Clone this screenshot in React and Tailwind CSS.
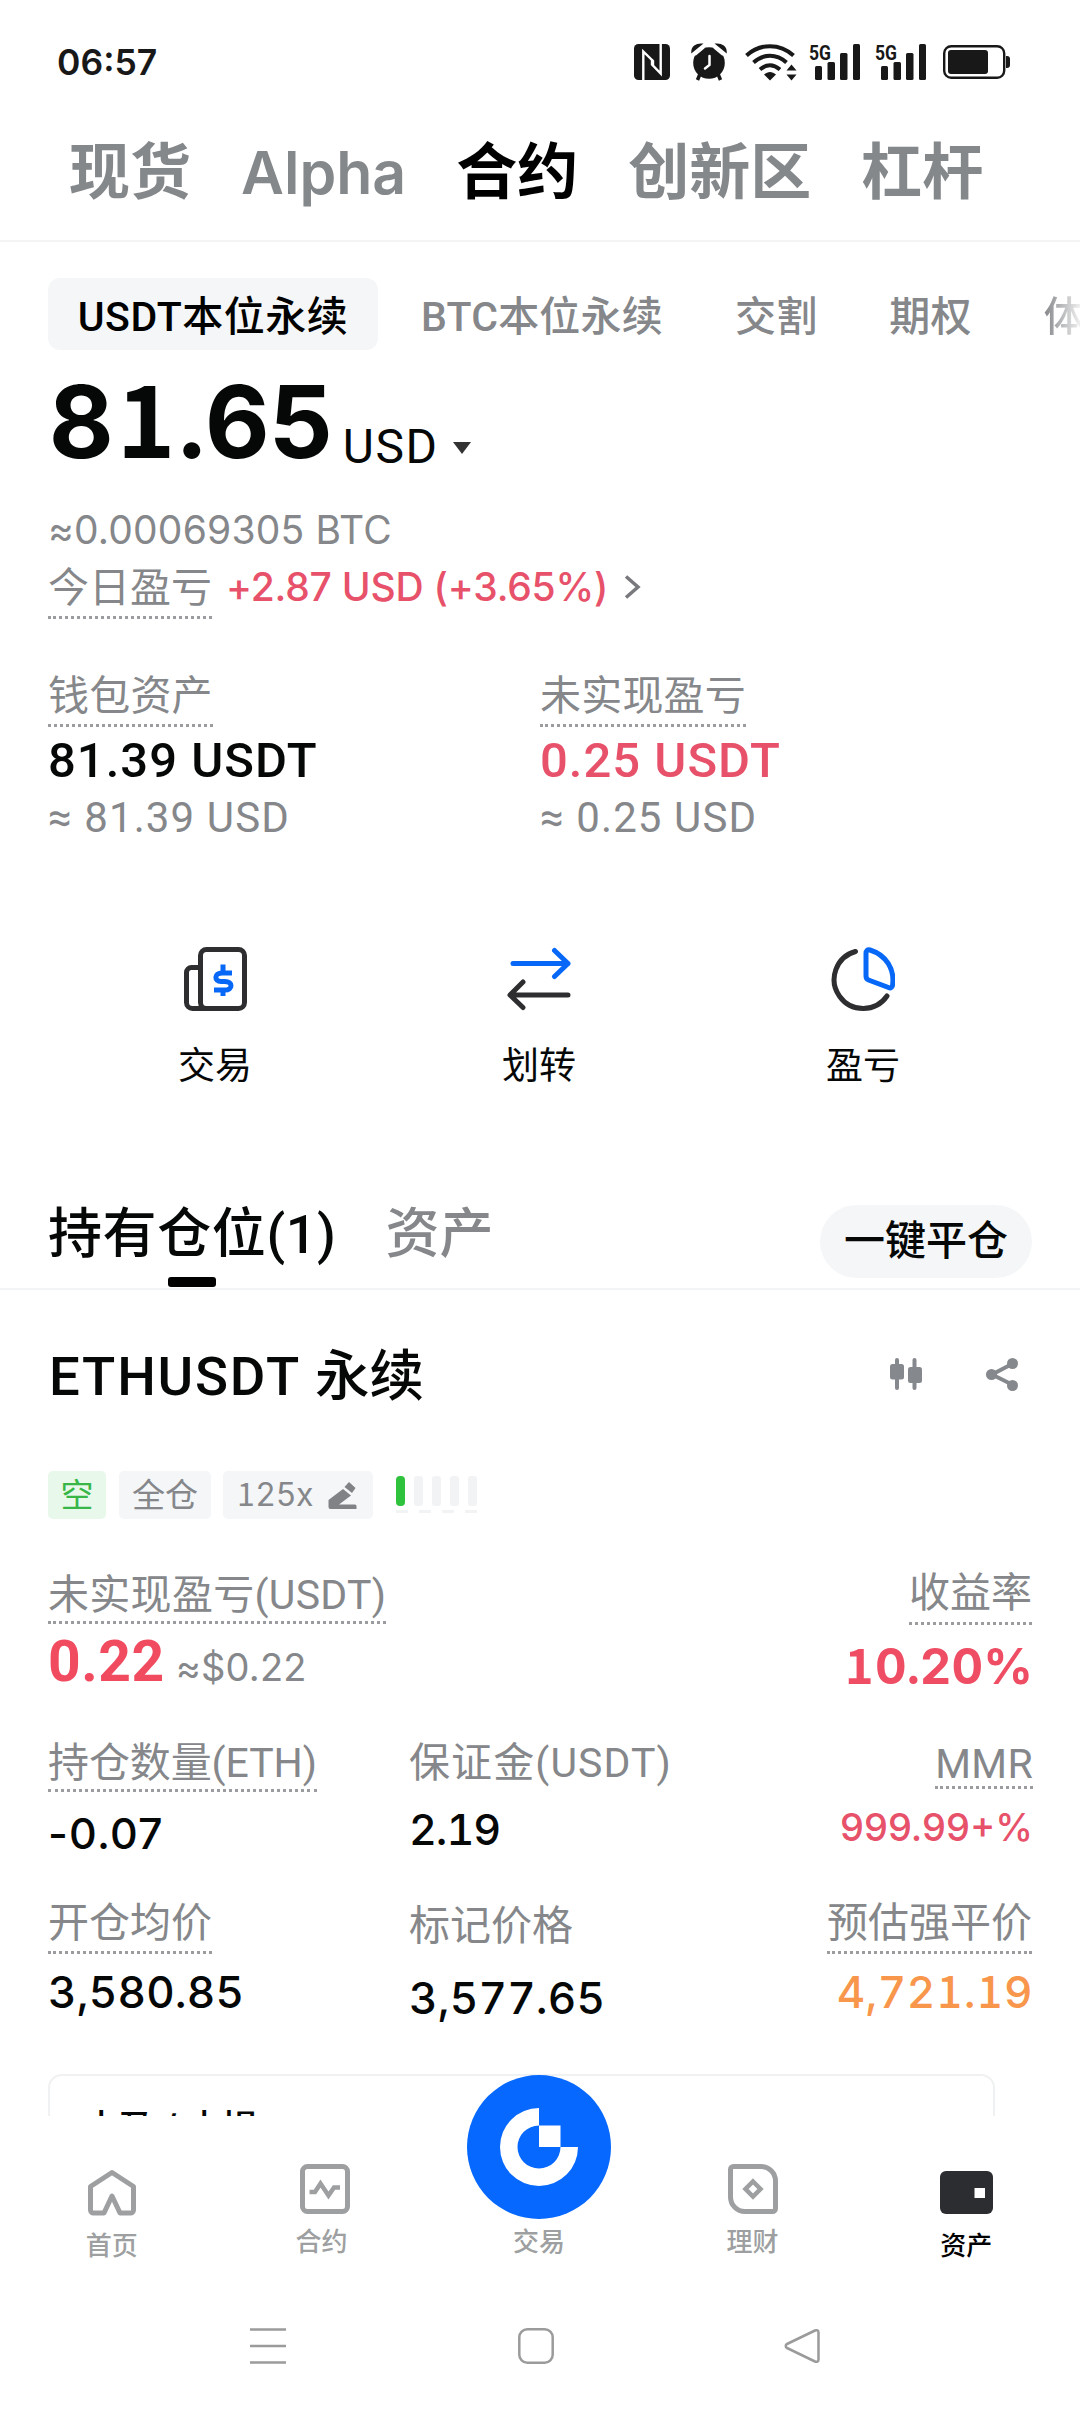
import React from "react";
import clsx from "clsx";

const marketTabs = ["现货", "Alpha", "合约", "创新区", "杠杆"];
const contractTypes = ["BTC本位永续", "交割", "期权"];

const roboto = "font-[Roboto,'Noto_Sans_CJK_SC',sans-serif]";

// Digits with a slab "1"
function SlabNumber({ value, className }) {
    return (
        <span className={clsx("tabular-nums", className)}>
            {value.split(/(1)/).map((part, i) =>
                part === "1" ? (
                    <span key={i} className="font-['Noto_Sans_CJK_SC',sans-serif] leading-none px-[0.03em]">
                        1
                    </span>
                ) : (
                    part
                )
            )}
        </span>
    );
}

function SignalBars() {
    return (
        <svg className="w-[52px] h-[38px] overflow-visible" viewBox="0 0 52 38" fill="#181818">
            <text x="0" y="16.500" fontSize="21" fontWeight="700" fontFamily="Roboto, sans-serif" textLength="22" lengthAdjust="spacingAndGlyphs">
                5G
            </text>
            <rect x="6" y="23" width="7" height="14" rx="1.5" />
            <rect x="18.5" y="19" width="7.5" height="18" rx="1.5" />
            <rect x="31" y="10" width="7.5" height="27" rx="1.5" />
            <rect x="44" y="1" width="7" height="36" rx="1.5" />
        </svg>
    );
}

function StatusBar() {
    return (
        <div className="h-[124px] pl-[57px] pr-[70px] flex items-center justify-between text-[#181818]">
            <span className="pt-px text-[35.5px] font-semibold leading-none">06:57</span>
            <div className="flex items-center">
                {/* NFC */}
                <svg className="w-9 h-9" viewBox="0 0 36 36">
                    <rect width="36" height="36" rx="4.5" fill="#181818" />
                    <path d="M9.300 36V7.500L19 17v5.500M26.700 0v29.500L18 20.500V15" fill="none" stroke="#fff" strokeWidth="2.400" />
                </svg>
                {/* Alarm */}
                <svg className="w-9 h-[38px] ml-[21px]" viewBox="0 0 36 38" fill="#181818">
                    <circle cx="18" cy="20" r="15.800" />
                    <path d="M1 9C1 4 5 1 10.500 1.200L1 9zM35 9C35 4 31 1 25.500 1.200L35 9z" stroke="#181818" strokeWidth="1.500" />
                    <path d="M4 12L13 4.500M32 12L23 4.500" stroke="#fff" strokeWidth="2" />
                    <path d="M9 31l-2.500 6M27 31l2.500 6" stroke="#181818" strokeWidth="3.500" />
                    <path d="M18.500 13v9l-4.500 3.500" fill="none" stroke="#fff" strokeWidth="2.500" strokeLinecap="round" />
                </svg>
                {/* Wifi */}
                <svg className="w-[52px] h-[38px] ml-[18px]" viewBox="0 0 52 38" fill="none" stroke="#181818" strokeWidth="4">
                    <path d="M1.500 12.500C15 0 35 0 48.500 12.500M8.500 19.500c10-9 23-9 33 0M15 26.500c6.500-5.500 13.500-5.500 20 0" />
                    <path d="M19 31.500c4-3.500 8-3.500 12 0l-6 6z" fill="#181818" stroke="none" />
                    <path d="M46.500 21.500l5 6h-10zM46.500 37.500l5-6h-10z" fill="#181818" stroke="none" />
                </svg>
                <div className="ml-3"><SignalBars /></div>
                <div className="ml-[14px]"><SignalBars /></div>
                {/* Battery */}
                <svg className="w-[67px] h-[34px] ml-[16px]" viewBox="0 0 67 34">
                    <rect x="1.200" y="1.200" width="60" height="31.600" rx="7" fill="none" stroke="#181818" strokeWidth="2.400" />
                    <rect x="5" y="5" width="40" height="24" rx="3" fill="#181818" />
                    <path d="M63 11h1a3 3 0 0 1 3 3v6a3 3 0 0 1-3 3h-1z" fill="#181818" />
                </svg>
            </div>
        </div>
    );
}

function TradeIcon() {
    return (
        <svg className="w-16 h-16" viewBox="0 0 64 64" fill="none" stroke="#2e2e30" strokeWidth="5">
            <rect x="17.500" y="2.500" width="44" height="59" rx="6" />
            <path d="M17.500 20.500H8.500a5 5 0 0 0-5 5v30a6 6 0 0 0 6 6h16" />
            <path d="M49 26h-10c-8 0-8 8.500-1 8.500h4c8 0 8 8.500 0 8.500H31M40 17.500v9M40 43v6" stroke="#0768f8" strokeWidth="5" />
        </svg>
    );
}

function TransferIcon() {
    return (
        <svg className="w-16 h-16" viewBox="0 0 64 64" fill="none" strokeWidth="5" strokeLinecap="round" strokeLinejoin="round">
            <path d="M6 16.500h55M47.500 3.500l13.500 13-13.500 13" stroke="#0768f8" />
            <path d="M61 48H3.500M16 35L3 48l13 12.500" stroke="#2e2e30" />
        </svg>
    );
}

function ProfitIcon() {
    return (
        <svg className="w-16 h-16" viewBox="0 0 64 64" fill="none" strokeWidth="5" strokeLinecap="round" strokeLinejoin="round">
            <path d="M24.500 4.500A29 29 0 1 0 56 49" stroke="#2e2e30" />
            <path d="M35 6.500c0-3 1.500-4.300 4-3.500 16 5 25 19 22.500 35.500-.4 2.500-2 2.800-4 2L37.500 33c-2-.8-2.500-2-2.500-4z" stroke="#0768f8" />
        </svg>
    );
}

const actions = [
    { label: "交易", Icon: TradeIcon },
    { label: "划转", Icon: TransferIcon },
    { label: "盈亏", Icon: ProfitIcon },
];

function Balance() {
    return (
        <section className="px-12">
            <div className="mt-[22px] h-[100px] flex items-end">
                <SlabNumber value="81.65" className="ml-px text-[100px] leading-[100px] font-bold tracking-[-0.2px]" />
                <span className={clsx(roboto, "ml-[9px] text-[48px] leading-[51px] tracking-[1.5px]")}>USD</span>
                <svg className="ml-[14px] mb-[18px] w-5 h-3" viewBox="0 0 20 12">
                    <path d="M1 0h18l-9 12z" fill="#333" />
                </svg>
            </div>
            <div className="mt-[30px] h-14 text-[39px] leading-[56px] tracking-[0.2px] text-[#85878a]">≈0.00069305 BTC</div>
            <div className="h-[61px] flex items-start text-[39px] leading-[58px]">
                <span className="text-[41px] text-[#85878a] border-b-[3px] border-dotted border-[#9a9c9f]">今日盈亏</span>
                <span className="ml-[14px] font-medium tracking-[-0.2px] text-[#e7516a]">+2.87 USD (+3.65%)</span>
                <svg className="ml-4 mt-[17px] w-[18px] h-6" viewBox="0 0 18 24" fill="none" stroke="#77797c" strokeWidth="3.500">
                    <path d="M2 1.500l12 10.500-12 10.500" />
                </svg>
            </div>
        </section>
    );
}

function Label({ children, dotted = true, className }) {
    return (
        <span
            className={clsx(
                roboto,
                "pt-[3px] text-[41px] text-[#85878a]",
                dotted && "border-b-[3px] border-dotted border-[#9a9c9f]",
                className
            )}
        >
            {children}
        </span>
    );
}

function WalletItem({ label, value, sub, red }) {
    return (
        <div className={clsx(roboto, "flex flex-col items-start")}>
            <Label className="leading-[55px] tracking-[0.2px]">{label}</Label>
            <span className={clsx("pt-[2px] text-[49px] leading-[64px] font-medium tracking-[1px]", red && "text-[#e7516a]")}>{value}</span>
            <span className="pt-[2px] text-[42px] leading-[46px] tracking-[1.1px] text-[#85878a]">{sub}</span>
        </div>
    );
}

function PositionHeader() {
    return (
        <>
            <div className="mt-[104px] h-[98px] px-12 flex items-start border-b-2 border-[#f3f4f5]">
                <div className="flex flex-col items-center">
                    <span className={clsx(roboto, "pt-1 text-[54px] leading-[78px] font-medium tracking-[0.6px]")}>持有仓位(1)</span>
                    <span className="mt-[3px] w-12 h-[10px] rounded-[3px] bg-black" />
                </div>
                <span className="ml-[49px] pt-1 text-[54px] leading-[76px] font-medium text-[#85878a]">资产</span>
                <button className="ml-auto mt-[13px] w-[212px] h-[73px] pb-[2px] rounded-full bg-[#f4f6f8] text-[41px] font-medium">
                    一键平仓
                </button>
            </div>
            <div className="mt-[46px] h-20 pl-[49px] pr-[60px] flex items-center">
                <span className={clsx(roboto, "pt-[2px] text-[54.5px] font-medium")}>
                    <span className="tracking-[1.8px]">ETHUSDT </span>永续
                </span>
                <svg className="ml-auto w-9 h-9" viewBox="0 0 36 36" fill="#85888c">
                    <rect x="1" y="6" width="14" height="15.500" rx="2.500" />
                    <rect x="6" y="0" width="4" height="32" rx="2" />
                    <rect x="19" y="9" width="14" height="16" rx="2.500" />
                    <rect x="23.500" y="0" width="4" height="32" rx="2" />
                </svg>
                <svg className="ml-[59px] w-9 h-9" viewBox="0 0 36 36" fill="#85888c">
                    <path d="M29 5.500L8 16.500l21 10.500" fill="none" stroke="#85888c" strokeWidth="4" />
                    <circle cx="28.500" cy="5.500" r="5.500" />
                    <circle cx="7.500" cy="16.500" r="5.500" />
                    <circle cx="28.500" cy="27.500" r="5.500" />
                </svg>
            </div>
            <div className="mt-[55px] h-12 px-12 flex items-start text-[33px] leading-[48px] text-[#85878a]">
                <span className="w-[58px] text-center rounded-[5px] bg-[#e8f8ea] text-[#38b748]">空</span>
                <span className="ml-[13px] w-[92px] text-center rounded-[5px] bg-[#f4f6f8]">全仓</span>
                <span className="ml-3 w-[150px] h-12 pl-[13px] flex items-center justify-between pr-4 rounded-[5px] bg-[#f4f6f8] text-[32px]">
                    <SlabNumber value="125x" className="tracking-[-0.4px]" />
                    <svg className="w-[29px] h-[29px]" viewBox="0 0 29 29" fill="#808286">
                        <path d="M.5 24v-5L15 8l8 6.500L11 23.500h16a1.500 1.500 0 0 1 1.500 1.500v3H2.500a2 2 0 0 1-2-2z" />
                        <path d="M21 1l6.500 6-3.500 5-7.500-6z" />
                    </svg>
                </span>
                <div className="ml-[23px] mt-[5px]">
                    <div className="flex gap-[9px]">
                        <span className="w-[9px] h-[30px] rounded-[4px] bg-[#2fc23c]" />
                        <span className="w-[9px] h-[30px] rounded-[3px] bg-[#f2f3f4]" />
                        <span className="w-[9px] h-[30px] rounded-[3px] bg-[#f2f3f4]" />
                        <span className="w-[9px] h-[30px] rounded-[3px] bg-[#f2f3f4]" />
                        <span className="w-[9px] h-[30px] rounded-[3px] bg-[#f2f3f4]" />
                    </div>
                    <div className="mt-[4px] flex justify-between">
                        <span className="w-3 h-[3px] bg-[#f2f3f4]" />
                        <span className="w-3 h-[3px] bg-[#f2f3f4]" />
                        <span className="w-3 h-[3px] bg-[#f2f3f4]" />
                        <span className="w-3 h-[3px] bg-[#f2f3f4]" />
                    </div>
                </div>
            </div>
        </>
    );
}

function PositionDetails() {
    return (
        <section className="px-12">
            <div className="mt-[42px] h-[147px] flex justify-between">
                <div className="flex flex-col items-start">
                    <Label className="mt-[6px] leading-[51px] tracking-[0.3px]">未实现盈亏(USDT)</Label>
                    <div className="flex items-end">
                        <span className={clsx(roboto, "pt-[3px] text-[57px] leading-[70px] font-bold tracking-[0.5px] text-[#f14b60]")}>0.22</span>
                        <span className="ml-[11px] text-[38px] leading-[59px] tracking-[0.2px] text-[#85878a]">≈$0.22</span>
                    </div>
                </div>
                <div className="flex flex-col items-end">
                    <Label className="leading-[58px]">收益率</Label>
                    <SlabNumber value="10.20%" className="-mr-px text-[49px] leading-[84px] font-bold text-[#ee4d63]" />
                </div>
            </div>
            <div className="mt-[27px] h-[139px] flex">
                <div className="w-[361px] flex flex-col items-start">
                    <Label className="leading-[51px] tracking-[-0.1px]">持仓数量(ETH)</Label>
                    <span className="text-[43px] leading-[82px] font-medium tracking-[1.2px]">-0.07</span>
                </div>
                <div className="flex-1 flex flex-col items-start">
                    <Label dotted={false} className="leading-[51px] tracking-[1.1px]">保证金(USDT)</Label>
                    <span className="text-[43px] leading-[81px] font-medium tracking-[-1px] tabular-nums">2.19</span>
                </div>
                <div className="flex flex-col items-end">
                    <Label className="mt-[5px] -mr-px leading-[43px] tracking-[0.3px]">MMR</Label>
                    <span className="-mr-px text-[38px] leading-[76px] font-medium text-[#e7516a]">999.99+%</span>
                </div>
            </div>
            <div className="mt-[19px] h-[148px] flex">
                <div className="w-[361px] flex flex-col items-start">
                    <Label className="leading-[55px]">开仓均价</Label>
                    <span className="text-[44px] leading-[76px] font-medium tracking-[0.2px] tabular-nums">3,580.85</span>
                </div>
                <div className="flex-1 flex flex-col items-start">
                    <Label dotted={false} className="leading-[60px]">标记价格</Label>
                    <span className="text-[44px] leading-[85px] font-medium tracking-[0.2px] tabular-nums">3,577.65</span>
                </div>
                <div className="flex flex-col items-end">
                    <Label className="leading-[55px]">预估强平价</Label>
                    <SlabNumber value="4,721.19" className="-mr-px text-[44px] leading-[76px] font-medium tracking-[0.4px] text-[#f8964c]" />
                </div>
            </div>
            {/* Next block, cut off by the nav bar */}
            <div className="mt-[33px] h-[42px] overflow-hidden">
                <div className="w-[947px] h-[120px] pl-[31px] pt-[27px] rounded-[14px] border-2 border-[#f0f1f2] text-[37.5px] leading-[52px] font-medium">
                    止盈<span className="px-[7px]">/</span>止损
                </div>
            </div>
        </section>
    );
}

function BottomNav() {
    return (
        <nav className="h-[164px] pl-[5px] pr-[7px] grid grid-cols-5 bg-white text-[26px] leading-[34px] font-medium text-[#9d9fa1]">
            <div className="pt-[53px] flex flex-col items-center">
                <svg className="w-[48px] h-[48px]" viewBox="0 0 48 48" fill="none" stroke="#9d9fa1" strokeWidth="5" strokeLinejoin="round">
                    <path d="M2.500 17.500L24 3.500l21.500 14V41a3 3 0 0 1-3 3H32L24 27l-8 17H5.500a3 3 0 0 1-3-3z" />
                </svg>
                <span className="mt-[12px]">首页</span>
            </div>
            <div className="pt-12 flex flex-col items-center">
                <svg className="w-[50px] h-[50px]" viewBox="0 0 50 50" fill="none" stroke="#9d9fa1" strokeWidth="5">
                    <rect x="2.500" y="2.500" width="45" height="45" rx="5" />
                    <path d="M9.500 28H15l5.500-8.500 8 12L34 23.500h6" strokeWidth="4.500" />
                </svg>
                <span className="mt-[11px] mr-2">合约</span>
            </div>
            <div className="-mt-[41px] flex flex-col items-center">
                <svg className="w-36 h-36 shrink-0" viewBox="0 0 144 144">
                    <circle cx="72" cy="72" r="72" fill="#0668ff" />
                    <path d="M72 33a39 39 0 1 0 39 39H93.500A21.500 21.500 0 1 1 72 50.500z" fill="#fff" />
                    <rect x="72" y="50.500" width="21.500" height="21.500" fill="#fff" />
                </svg>
                <span className="mt-[6px]">交易</span>
            </div>
            <div className="pt-12 flex flex-col items-center">
                <svg className="w-[50px] h-[50px]" viewBox="0 0 50 50" fill="none" stroke="#9d9fa1" strokeWidth="5">
                    <path d="M5.500 2.500H33A14.500 14.500 0 0 1 47.500 17v27.500a3 3 0 0 1-3 3H17A14.500 14.500 0 0 1 2.500 33V5.500a3 3 0 0 1 3-3z" />
                    <path d="M25 17.500l7.500 7.500-7.500 7.500-7.500-7.500z" strokeWidth="4.500" />
                </svg>
                <span className="mt-[11px]">理财</span>
            </div>
            <div className="pt-[55px] flex flex-col items-center text-black">
                <svg className="w-[53px] h-[43px]" viewBox="0 0 53 43">
                    <rect width="53" height="43" rx="6" fill="#2c2d30" />
                    <rect x="34.500" y="17" width="10.500" height="10" fill="#fff" />
                </svg>
                <span className="mt-[15px]">资产</span>
            </div>
        </nav>
    );
}

function SystemBar() {
    return (
        <div className="h-[132px] flex items-center bg-white">
            <svg className="ml-[250px] w-9 h-9" viewBox="0 0 36 36" stroke="#9b9b9b" strokeWidth="2.500">
                <path d="M0 1.500h36M0 18h36M0 34.500h36" />
            </svg>
            <svg className="ml-[232px] w-9 h-9" viewBox="0 0 36 36" fill="none" stroke="#9b9b9b" strokeWidth="2.500">
                <rect x="1.300" y="1.300" width="33.400" height="33.400" rx="8" />
            </svg>
            <svg className="ml-[230px] w-9 h-9" viewBox="0 0 36 36" fill="none" stroke="#9b9b9b" strokeWidth="2.500" strokeLinejoin="round">
                <path d="M31 2.500L3 16a2.200 2.200 0 0 0 0 4L31 33.500c2 .8 3.500.2 3.500-2v-27c0-2.200-1.500-2.800-3.500-2z" />
            </svg>
        </div>
    );
}

export default function App() {
    return (
        <div className="w-[1080px] h-[2412px] overflow-hidden bg-white text-[#060808] whitespace-nowrap font-[Inter,'Noto_Sans_CJK_SC',sans-serif]">
            <StatusBar />

            {/* Market tabs */}
            <div className="h-[118px] pb-[18px] pl-[69px] flex items-center gap-[50px] border-b-2 border-[#f4f4f4] text-[61px] font-bold text-[#85888b]">
                {marketTabs.map((tab) => (
                    <span key={tab} className={clsx(tab === "合约" && "text-black", tab === "Alpha" && "text-[59px] font-semibold")}>
                        {tab}
                    </span>
                ))}
            </div>

            {/* Contract types */}
            <div className={clsx(roboto, "mt-9 h-[72px] pl-12 flex items-center text-[41px] font-medium text-[#85878a]")}>
                <span className="h-[72px] w-[330px] shrink-0 leading-[79px] tracking-[0.5px] text-center rounded-xl bg-[#f4f6f8] text-black">USDT本位永续</span>
                <div className="ml-[43px] pt-[7px] flex gap-[72px] tracking-[0.2px]">
                    {contractTypes.map((type) => (
                        <span key={type}>{type}</span>
                    ))}
                    <span className="bg-gradient-to-r from-[#85878a] to-white bg-clip-text text-transparent">体</span>
                </div>
            </div>

            <Balance />

            <div className="mt-[47px] px-12 grid grid-cols-2">
                <WalletItem label="钱包资产" value="81.39 USDT" sub="≈ 81.39 USD" />
                <WalletItem label="未实现盈亏" value="0.25 USDT" sub="≈ 0.25 USD" red />
            </div>

            <div className="mt-[106px] pl-[53px] pr-[55px] grid grid-cols-3">
                {actions.map(({ label, Icon }) => (
                    <div key={label} className="flex flex-col items-center">
                        <Icon />
                        <span className="mt-[33px] text-[37px] leading-[44px]">{label}</span>
                    </div>
                ))}
            </div>

            <PositionHeader />
            <PositionDetails />
            <BottomNav />
            <SystemBar />
        </div>
    );
}
